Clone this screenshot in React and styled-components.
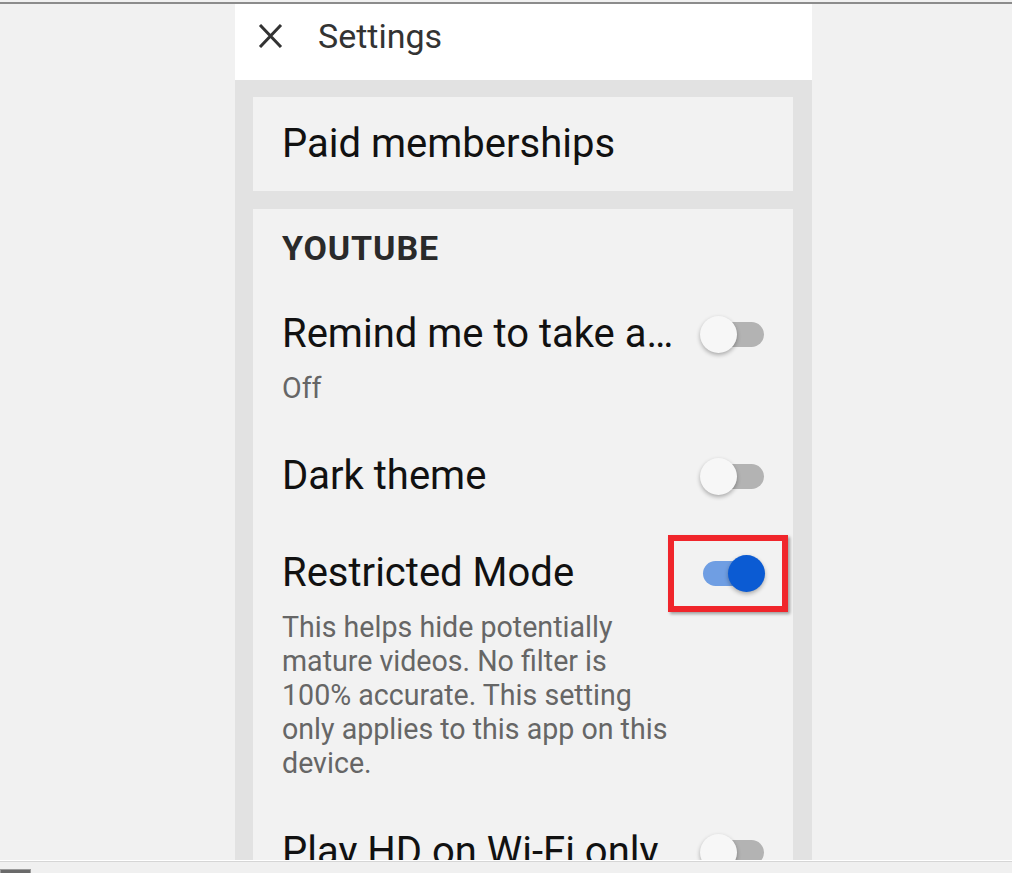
import React from "react";
import styled, { createGlobalStyle } from "styled-components";

const GlobalStyle = createGlobalStyle`
  html, body {
    margin: 0;
    padding: 0;
    background: #f1f1f1;
    overflow: hidden;
    font-family: Roboto, "Liberation Sans", Arial, sans-serif;
  }
`;

const Page = styled.div`
  height: 873px;
  display: flex;
  flex-direction: column;
`;

const TopRule = styled.div`
  margin-top: 2px;
  height: 2px;
  background: #8c8c8c;
  flex-shrink: 0;
`;

const Stage = styled.div`
  height: 856px;
  overflow: hidden;
  flex-shrink: 0;
`;

const Phone = styled.div`
  width: 577px;
  margin-left: 235px;
  min-height: 100%;
  background: #e2e2e2;
`;

const Header = styled.div`
  height: 76px;
  box-sizing: border-box;
  padding: 12px 0 0 23px;
  background: #ffffff;
  display: flex;
  align-items: flex-start;
`;

const HeaderLine = styled.div`
  height: 40px;
  display: flex;
  align-items: center;
  gap: 35px;
`;

const Title = styled.h1`
  margin: 0;
  font-size: 34px;
  line-height: 40px;
  font-weight: 400;
  color: #333;
`;

const Body = styled.div`
  padding: 17px 19px 0 18px;
  display: flex;
  flex-direction: column;
  gap: 18px;
`;

const Card = styled.div`
  background: #f2f2f2;
  padding: ${(p) => p.$pad || "0 28px 0 29px"};
`;

const LinkCard = styled(Card)`
  height: 94px;
  display: flex;
  align-items: center;
`;

const Label = styled.div`
  font-size: 40px;
  line-height: 48px;
  color: #111;
  flex: 1;
  white-space: nowrap;
`;

const SectionHead = styled.div`
  font-size: 34px;
  line-height: 40px;
  font-weight: 700;
  color: #2a2a2a;
  letter-spacing: 0.9px;
`;

const Setting = styled.div`
  margin-top: ${(p) => p.$top}px;
  position: relative;
`;

const TitleLine = styled.div`
  display: flex;
  align-items: center;
`;

const Sub = styled.div`
  margin-top: 13px;
  font-size: 28.6px;
  line-height: 34px;
  color: #666;
  max-width: 392px;
`;

const ToggleBox = styled.div`
  position: relative;
  width: 65px;
  height: 37px;
  flex-shrink: 0;
`;

const Track = styled.div`
  position: absolute;
  left: 3px;
  right: 1px;
  top: 6px;
  height: 25px;
  border-radius: 13px;
  background: ${(p) => (p.$on ? "#6f9ee3" : "#b3b3b3")};
`;

const Thumb = styled.div`
  position: absolute;
  top: 0;
  ${(p) => (p.$on ? "right: 0;" : "left: 0;")}
  width: 37px;
  height: 37px;
  border-radius: 50%;
  background: ${(p) => (p.$on ? "#0b5bd3" : "#f7f7f7")};
  box-shadow: 0 2px 4px rgba(0, 0, 0, 0.3);
`;

const Highlight = styled.div`
  position: absolute;
  left: -32px;
  top: -20px;
  width: 120px;
  height: 77px;
  box-sizing: border-box;
  border: 6px solid #f0252b;
  box-shadow: 2px 2px 3px rgba(0, 0, 0, 0.35);
  pointer-events: none;
`;

const Marked = styled.div`
  position: relative;
  display: flex;
  align-items: center;
`;

const BottomBar = styled.div`
  flex: 1;
  border-top: 1px solid #ffffff;
  box-shadow: inset 0 1px 0 #d6d6d6;
  background: #f0f0f0;
  position: relative;
`;

const ScrollThumb = styled.div`
  position: absolute;
  left: 0;
  top: 8px;
  width: 29px;
  height: 6px;
  background: #6a6a6a;
  border: 1px solid #9a9a9a;
`;

const CloseIcon = () => (
  <svg width="25" height="24" viewBox="0 0 25 24">
    <path d="M2 1 L23 23 M23 1 L2 23" stroke="#333" strokeWidth="3" fill="none" />
  </svg>
);

const Toggle = ({ on }) => (
  <ToggleBox>
    <Track $on={on} />
    <Thumb $on={on} />
  </ToggleBox>
);

const App = () => {
  return (
    <Page>
      <GlobalStyle />
      <TopRule />
      <Stage>
        <Phone>
          <Header>
            <HeaderLine>
              <CloseIcon />
              <Title>Settings</Title>
            </HeaderLine>
          </Header>
          <Body>
            <LinkCard>
              <Label>Paid memberships</Label>
            </LinkCard>
            <Card $pad="19px 28px 40px 29px">
              <SectionHead>YOUTUBE</SectionHead>
              <Setting $top={42}>
                <TitleLine>
                  <Label>Remind me to take a…</Label>
                  <Toggle />
                </TitleLine>
                <Sub>Off</Sub>
              </Setting>
              <Setting $top={47}>
                <TitleLine>
                  <Label>Dark theme</Label>
                  <Toggle />
                </TitleLine>
              </Setting>
              <Setting $top={49}>
                <TitleLine>
                  <Label>Restricted Mode</Label>
                  <Marked>
                    <Toggle on />
                    <Highlight />
                  </Marked>
                </TitleLine>
                <Sub>
                  This helps hide potentially mature videos. No filter is 100% accurate. This setting
                  only applies to this app on this device.
                </Sub>
              </Setting>
              <Setting $top={48}>
                <TitleLine>
                  <Label>Play HD on Wi-Fi only</Label>
                  <Toggle />
                </TitleLine>
              </Setting>
            </Card>
          </Body>
        </Phone>
      </Stage>
      <BottomBar>
        <ScrollThumb />
      </BottomBar>
    </Page>
  );
};

export default App;
